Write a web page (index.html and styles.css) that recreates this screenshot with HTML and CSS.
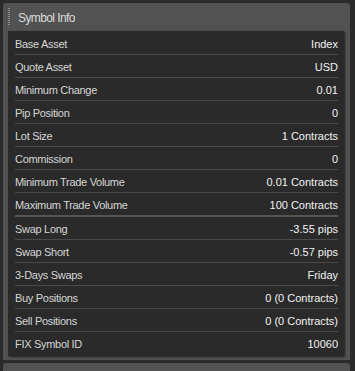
FILE: index.html
```html
<!DOCTYPE html>
<html lang="en">
<head>
    <meta charset="UTF-8">
    <title>Symbol Info</title>
    <link rel="stylesheet" href="styles.css">
</head>
<body>
<div class="panel">
    <div class="panel-head">
        <span class="grip"></span>
        <span class="panel-title">Symbol Info</span>
    </div>
    <div class="info">
        <div class="row"><span class="label">Base Asset</span><span class="value">Index</span></div>
        <div class="row"><span class="label">Quote Asset</span><span class="value">USD</span></div>
        <div class="row"><span class="label">Minimum Change</span><span class="value">0.01</span></div>
        <div class="row"><span class="label">Pip Position</span><span class="value">0</span></div>
        <div class="row"><span class="label">Lot Size</span><span class="value">1 Contracts</span></div>
        <div class="row"><span class="label">Commission</span><span class="value">0</span></div>
        <div class="row"><span class="label">Minimum Trade Volume</span><span class="value">0.01 Contracts</span></div>
        <div class="row group-end"><span class="label">Maximum Trade Volume</span><span class="value">100 Contracts</span></div>
        <div class="row"><span class="label">Swap Long</span><span class="value">-3.55 pips</span></div>
        <div class="row"><span class="label">Swap Short</span><span class="value">-0.57 pips</span></div>
        <div class="row"><span class="label">3-Days Swaps</span><span class="value">Friday</span></div>
        <div class="row"><span class="label">Buy Positions</span><span class="value">0 (0 Contracts)</span></div>
        <div class="row"><span class="label">Sell Positions</span><span class="value">0 (0 Contracts)</span></div>
        <div class="row"><span class="label">FIX Symbol ID</span><span class="value">10060</span></div>
    </div>
</div>
<div class="panel next"></div>
</body>
</html>
```
FILE: styles.css
```css
body {
    margin: 0;
    padding: 3px 5px 0 3px;
    background: #2b2b2b;
    font-family: "Liberation Sans", Arial, sans-serif;
    height: 371px;
    box-sizing: border-box;
    overflow: hidden;
}

.panel {
    background: #525252;
    border-radius: 3px 3px 0 0;
    padding: 0 6px 4px 5px;
}

.panel.next {
    margin-top: 3px;
    height: 20px;
}

.panel-head {
    height: 28px;
    display: flex;
    align-items: center;
}

.grip {
    width: 2px;
    height: 18px;
    background: repeating-linear-gradient(to bottom, #8c8c8c 0 1px, transparent 1px 2px);
}

.panel-title {
    margin-left: 8px;
    padding-top: 1px;
    color: #dcdcdc;
    font-size: 12px;
    letter-spacing: -0.6px;
}

.info {
    background: #2a2a2a;
    padding: 1px 6px 2px 7px;
    box-shadow: 1px 1px 2px rgba(0, 0, 0, 0.6);
}

.row {
    height: 21px;
    padding-top: 1px;
    display: flex;
    align-items: center;
    justify-content: space-between;
    border-bottom: 1px solid #4a4a4a;
    font-size: 11px;
}

.row:last-child {
    border-bottom: none;
}

.row.group-end {
    border-bottom: 2px solid #555;
}

.label {
    color: #d6d6d6;
    letter-spacing: -0.3px;
}

.value {
    color: #f2f2f2;
}
```
